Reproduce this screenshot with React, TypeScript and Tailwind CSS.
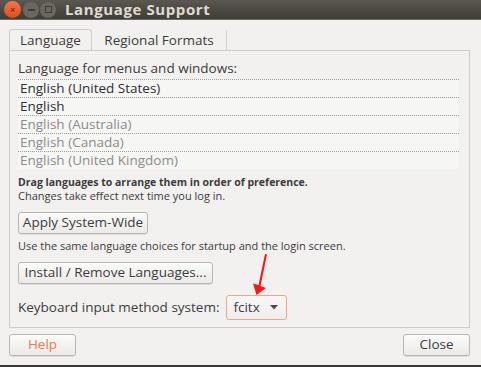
import React from "react";

const languages = [
  { name: "English (United States)", active: true },
  { name: "English", active: true },
  { name: "English (Australia)", active: false },
  { name: "English (Canada)", active: false },
  { name: "English (United Kingdom)", active: false },
];

function GtkButton({
  children,
  className = "",
}: {
  children: React.ReactNode;
  className?: string;
}) {
  return (
    <button
      className={`flex h-[22px] items-center justify-center whitespace-nowrap rounded-[3px] border border-[#b9b6b1] bg-gradient-to-b from-[#fbfbfa] to-[#ebeae8] px-0 text-[13.5px] leading-none text-[#3c3c3c] shadow-[0_1px_0_rgba(0,0,0,0.08)] ${className}`}
    >
      {children}
    </button>
  );
}

function App() {
  return (
    <div
      className="relative flex h-[367px] w-[481px] flex-col overflow-hidden bg-[#f2f1f0] text-[#3c3c3c]"
      style={{ fontFamily: '"Open Sans", "DejaVu Sans", sans-serif' }}
    >
      {/* title bar */}
      <div className="flex h-[20px] items-center border-b border-[#6d6a64] bg-gradient-to-b from-[#5b5751] to-[#3f3d38]">
        <div className="ml-[4px] flex items-center gap-[1px]">
          <span className="flex h-[17px] w-[17px] items-center justify-center rounded-full bg-gradient-to-b from-[#f2764a] to-[#df4a1a] text-[9px] font-bold leading-none text-[#7a2a10]">
            ×
          </span>
          <span className="ml-[1px] flex h-[16px] w-[16px] items-center justify-center rounded-full bg-[#6a6760]">
            <span className="h-[2px] w-[7px] bg-[#3e3c37]" />
          </span>
          <span className="flex h-[16px] w-[16px] items-center justify-center rounded-full bg-[#6a6760]">
            <span className="h-[7px] w-[7px] border border-[#3e3c37]" />
          </span>
        </div>
        <span className="ml-[9px] text-[15px] font-bold leading-none tracking-[0.6px] text-[#dfdbd2]">
          Language Support
        </span>
      </div>

      <div className="flex flex-1 flex-col pl-[9px] pr-[11px] pt-[9px]">
        {/* tabs */}
        <div className="flex h-[22px] items-end">
          <div className="flex h-[22px] w-[83px] items-center justify-center rounded-t-[3px] border border-b-0 border-[#cfcdc9] bg-[#f2f1f0] text-[13.5px]">
            Language
          </div>
          <div className="flex h-[21px] w-[135px] items-center justify-center border-r border-[#d6d4d0] text-[13.5px]">
            Regional Formats
          </div>
        </div>

        {/* notebook page */}
        <div className="-mt-px flex h-[278px] flex-col border border-[#cfcdc9] pl-[8px] pr-[10px]">
          <div className="pt-[8px] text-[13.5px] leading-[18px]">
            Language for menus and windows:
          </div>
          <div className="mt-[2px] bg-[#f6f6f5]">
            {languages.map((l) => (
              <div
                key={l.name}
                className={`h-[18px] border-t border-dotted border-[#9e9e9e] pl-[2px] text-[13.5px] leading-[17px] ${
                  l.active ? "text-[#2f2f2f]" : "text-[#8c8c8c]"
                }`}
              >
                {l.name}
              </div>
            ))}
          </div>

          <div className="mt-[7px] text-[10.5px] font-bold leading-[13px]">
            Drag languages to arrange them in order of preference.
          </div>
          <div className="text-[11px] leading-[13px]">
            Changes take effect next time you log in.
          </div>

          <GtkButton className="mt-[10px] w-[130px]">Apply System-Wide</GtkButton>

          <div className="mt-[6px] text-[11px] leading-[12px]">
            Use the same language choices for startup and the login screen.
          </div>

          <GtkButton className="mt-[10px] w-[195px]">
            Install / Remove Languages...
          </GtkButton>

          <div className="mt-[11px] flex items-center gap-[7px]">
            <span className="text-[13.5px]">Keyboard input method system:</span>
            <div className="flex h-[25px] w-[61px] items-center justify-between rounded-[3px] border border-[#e8a68a] bg-gradient-to-b from-[#f8f7f6] to-[#efeeec] pl-[6px] pr-[8px] text-[13.5px]">
              <span>fcitx</span>
              <svg width="8" height="5" viewBox="0 0 8 5">
                <path d="M0 0 L8 0 L4 4.5 Z" fill="#4a4a4a" />
              </svg>
            </div>
          </div>
        </div>

        {/* dialog buttons */}
        <div className="mt-[6px] flex justify-between">
          <GtkButton className="w-[67px] text-[#ec7a4f]">Help</GtkButton>
          <GtkButton className="w-[67px]">Close</GtkButton>
        </div>
      </div>

      <div className="h-[2px] bg-[#3a3835]" />

      {/* annotation arrow */}
      <svg
        className="absolute left-[248px] top-[250px]"
        width="24"
        height="50"
        viewBox="0 0 24 50"
      >
        <path
          d="M17 4 L19 4.5 L12.5 36 L18 38 L8.5 45 L5 33.5 L10.5 35 Z"
          fill="#ee1c1c"
        />
      </svg>
    </div>
  );
}

export default App;
